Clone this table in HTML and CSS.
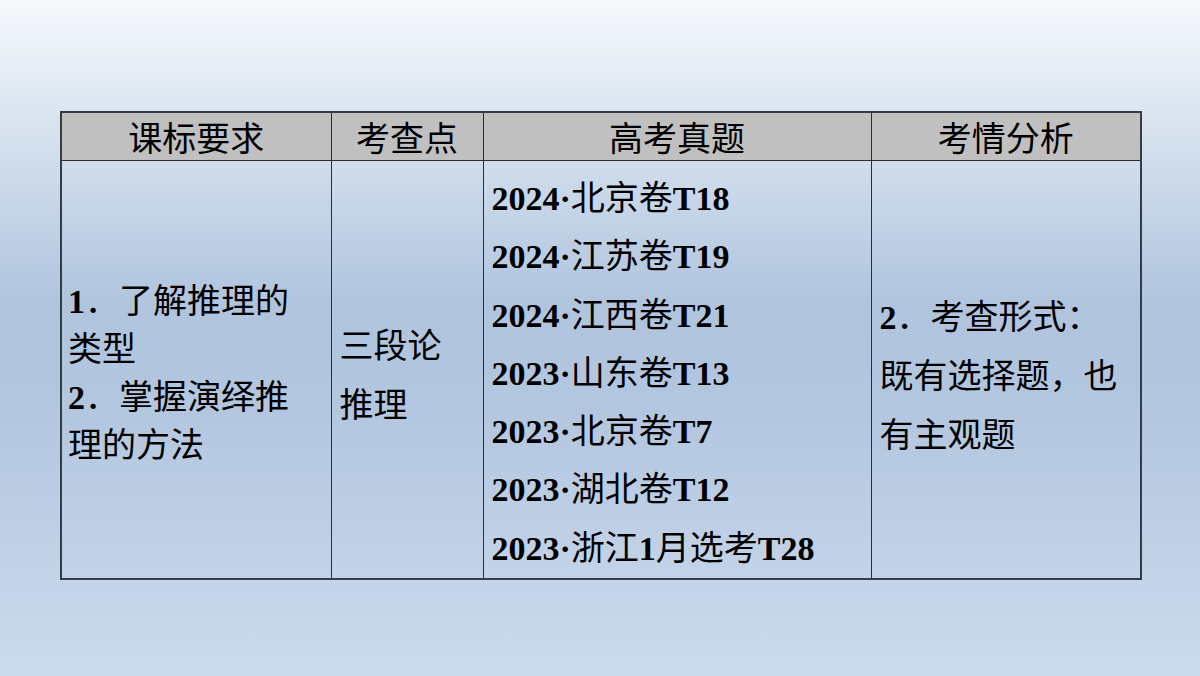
FILE: index.html
```html
<!DOCTYPE html>
<html lang="zh-CN">
<head>
<meta charset="utf-8">
<title>推理</title>
<link rel="stylesheet" href="styles.css">
</head>
<body>
<div class="slide">
  <table class="grid">
    <colgroup>
      <col class="c1"><col class="c2"><col class="c3"><col class="c4">
    </colgroup>
    <thead>
      <tr>
        <th>课标要求</th>
        <th>考查点</th>
        <th>高考真题</th>
        <th>考情分析</th>
      </tr>
    </thead>
    <tbody>
      <tr>
        <td class="req"><b>1</b>．了解推理的<br>类型<br><b>2</b>．掌握演绎推<br>理的方法</td>
        <td class="pt">三段论<br>推理</td>
        <td class="exam">
          <b>2024·</b>北京卷<b>T18</b><br>
          <b>2024·</b>江苏卷<b>T19</b><br>
          <b>2024·</b>江西卷<b>T21</b><br>
          <b>2023·</b>山东卷<b>T13</b><br>
          <b>2023·</b>北京卷<b>T7</b><br>
          <b>2023·</b>湖北卷<b>T12</b><br>
          <b>2023·</b>浙江<b>1</b>月选考<b>T28</b>
        </td>
        <td class="ana"><b>2</b>．考查形式：<br>既有选择题，也<br>有主观题</td>
      </tr>
    </tbody>
  </table>
</div>
</body>
</html>
```

FILE: styles.css
```css
html, body {
  margin: 0;
  padding: 0;
}
body {
  width: 1200px;
  height: 676px;
  overflow: hidden;
  background: linear-gradient(180deg, #f6f9fc 0%, #dce6f1 16%, #b0c4de 45%, #b3c6df 60%, #ccdbed 100%);
  font-family: "Liberation Serif", "Noto Sans CJK SC", serif;
  color: #000;
}
.slide {
  padding: 111px 0 0 60px;
}
.grid {
  border-collapse: collapse;
  width: 1081px;
  table-layout: fixed;
  border: 2px solid #333c47;
  font-size: 34px;
}
.c1 { width: 270px; }
.c2 { width: 152px; }
.c3 { width: 388px; }
.c4 { width: 270px; }
.grid th {
  background: #c0c0c0;
  font-weight: 400;
  height: 47px;
  padding: 0;
  line-height: 47px;
  border: 1px solid #2e2e2e;
  border-top: 2px solid #333c47;
  text-align: center;
  font-family: "Noto Sans CJK SC", sans-serif;
}
.grid td {
  border: 1px solid #2e2e2e;
  vertical-align: middle;
  padding: 13px 4px 0 8px;
  height: 404px;
  line-height: 59px;
  white-space: nowrap;
}
.grid b {
  font-family: "Liberation Serif", serif;
  font-weight: 700;
}
.grid td.req {
  line-height: 48px;
  padding-left: 6px;
  padding-top: 8px;
  height: 409px;
}
.grid td.exam {
  line-height: 58.3px;
  padding-top: 9px;
  height: 408px;
}
```
